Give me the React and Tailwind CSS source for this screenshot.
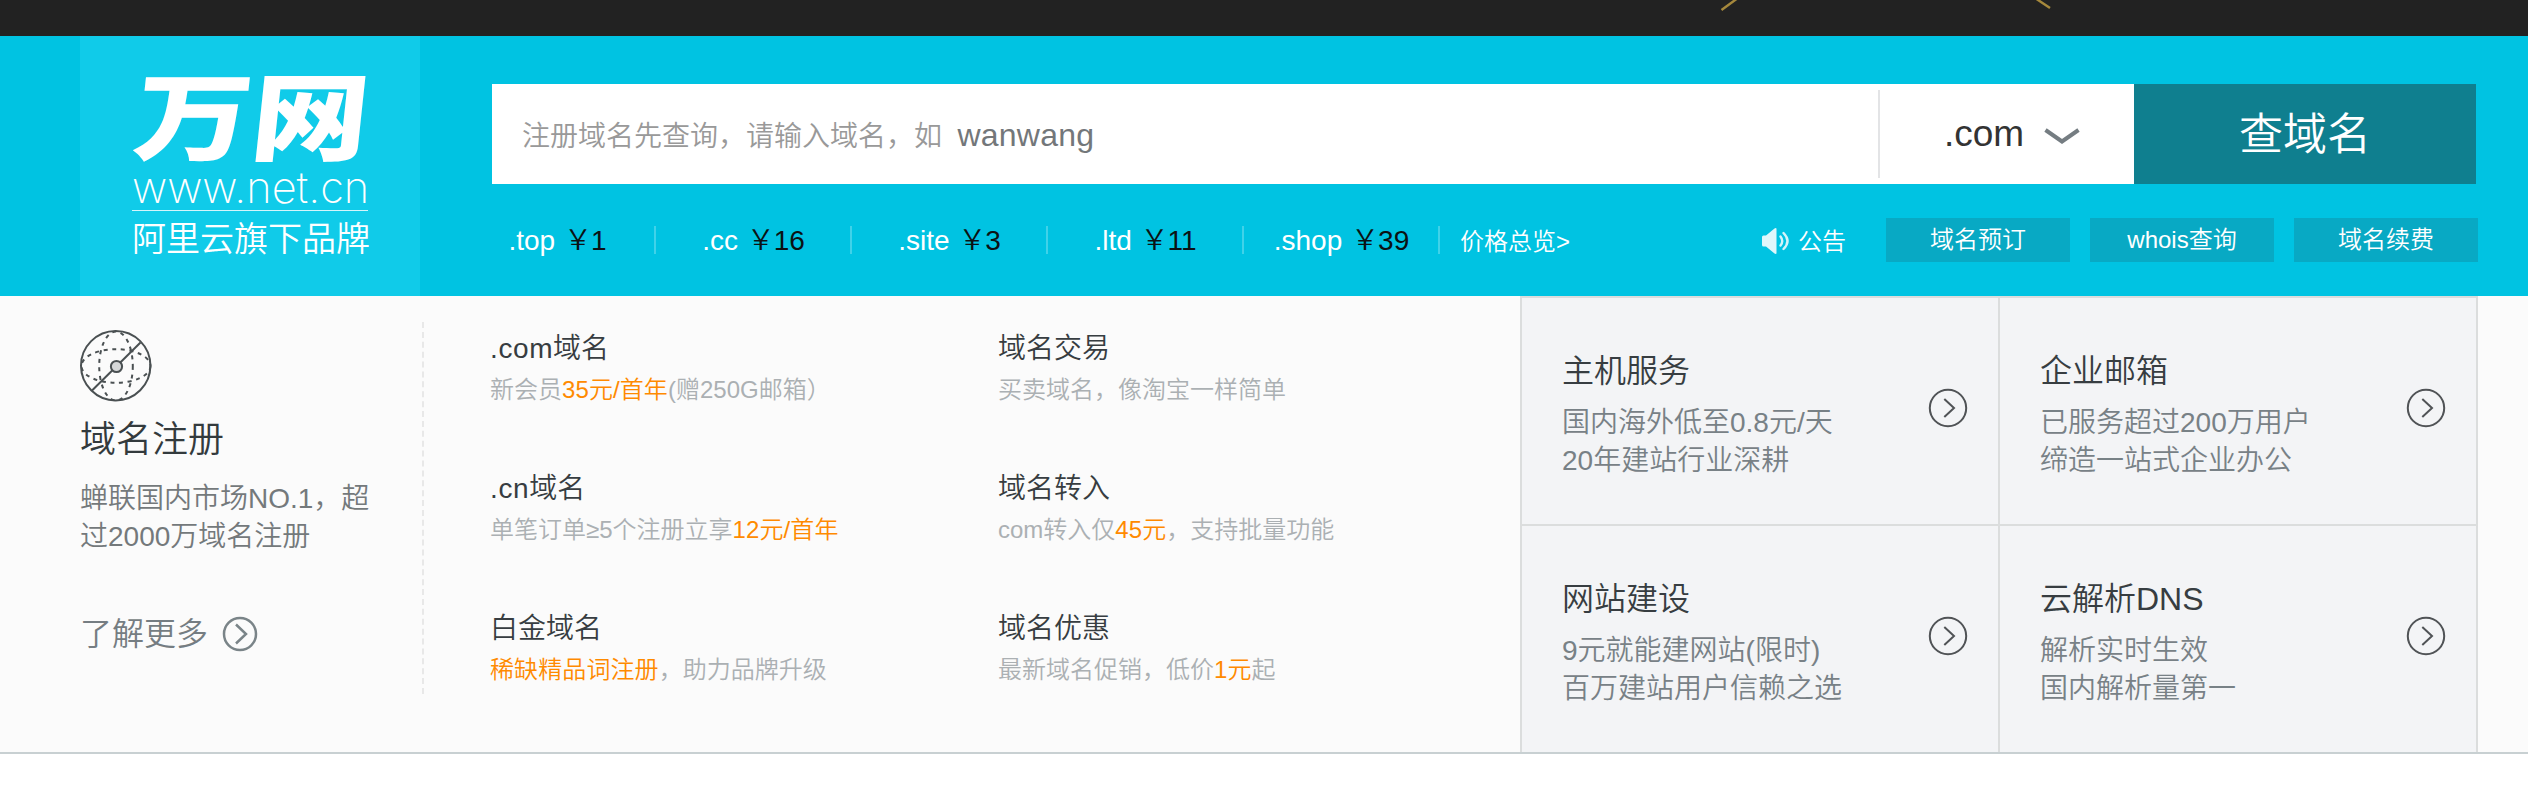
const prices = [
  ['.top', '1'],
  ['.cc', '16'],
  ['.site', '3'],
  ['.ltd', '11'],
  ['.shop', '39'],
];

const shortcuts = ['域名预订', 'whois查询', '域名续费'];

const Hot = ({ children }) => <span className="tracking-[0.1px] text-[#ff8a00]">{children}</span>;

const offers = [
  { latin: '.com', title: '域名', text: <>新会员<Hot>35元/首年</Hot>(赠250G邮箱）</> },
  { title: '域名交易', text: <>买卖域名，像淘宝一样简单</> },
  { latin: '.cn', title: '域名', text: <>单笔订单≥5个注册立享<Hot>12元/首年</Hot></> },
  { title: '域名转入', text: <>com转入仅<Hot>45元</Hot>，支持批量功能</> },
  { title: '白金域名', text: <><Hot>稀缺精品词注册</Hot>，助力品牌升级</> },
  { title: '域名优惠', text: <>最新域名促销，低价<Hot>1元</Hot>起</> },
];

const services = [
  { title: '主机服务', lines: ['国内海外低至0.8元/天', '20年建站行业深耕'] },
  { title: '企业邮箱', lines: ['已服务超过200万用户', '缔造一站式企业办公'] },
  { title: '网站建设', lines: ['9元就能建网站(限时)', '百万建站用户信赖之选'] },
  { title: '云解析DNS', lines: ['解析实时生效', '国内解析量第一'] },
];

function Globe() {
  return (
    <svg className="block size-[72px]" viewBox="0 0 72 72" fill="none" stroke="#4a5052" strokeWidth="2">
      <circle cx="35.7" cy="35.7" r="34.7" />
      <ellipse cx="36" cy="36" rx="16.8" ry="34.5" strokeDasharray="4 4.6" />
      <ellipse cx="36" cy="36" rx="34.5" ry="16.8" strokeDasharray="4 4.6" />
      <path d="M12 60.5 60.5 12.5" />
      <circle cx="36.5" cy="36.5" r="5.6" fill="#d5d7d8" />
    </svg>
  );
}

function Speaker() {
  return (
    <svg className="mt-[10px] block h-[26px] w-[27px]" viewBox="0 0 27 26" fill="none">
      <path d="M0 9Q0 7.500 1.500 7.500H4L12.500 0.500Q14.500-.5 14.500 1V25Q14.500 26.500 12.500 25.500L4 18.500H1.500Q0 18.500 0 17Z" fill="#e0f7fb" />
      <path d="M18.500 8.500Q22 13 18.500 17.500M21.500 5Q29.500 13 21.500 21" stroke="#d3f4fa" strokeWidth="2.400" strokeLinecap="round" />
    </svg>
  );
}

export default function App() {
  return (
    <div className="h-[800px] w-[2528px] overflow-hidden bg-white font-['Liberation_Sans','Noto_Sans_CJK_SC',sans-serif] font-[350]">
      <div className="h-[36px] bg-[#222222]">
        <svg className="ml-[1720px] block h-[12px] w-[340px]" viewBox="0 0 340 12" fill="none" stroke="#a5883c" strokeWidth="2.400">
          <path d="M1.500 10 22-5M306-8 330 8" />
        </svg>
      </div>

      <header className="flex h-[260px] bg-[#00c3e2] pl-[80px]">
        <div className="w-[340px] shrink-0 bg-[#10cbe9] pt-[25px] pl-[52px] text-white">
          <div className="h-[100px] w-[200px] origin-left -skew-x-[5deg] scale-x-[1.22] pl-[3px] font-['Noto_Sans_CJK_SC',sans-serif] text-[96px] leading-[101px] font-black whitespace-nowrap">万网</div>
          <div className="mt-[3px] h-[46px] font-['Inter',sans-serif] text-[43.3px] leading-[47px] font-extralight">www.net.cn</div>
          <div className="h-px w-[236px] bg-[#d5f5fb]" />
          <div className="mt-[8px] text-[34px] leading-[40px] whitespace-nowrap">阿里云旗下品牌</div>
        </div>

        <div className="w-[2058px] pt-[48px] pl-[40px]">
          <div className="ml-[32px] flex h-[100px] w-[1984px] bg-white">
            <div className="h-[100px] w-[1386px] pt-px pl-[30px] text-[28px] leading-[100px] whitespace-pre text-[#999999]">
              {'注册域名先查询，请输入域名，如  '}<span className="text-[32px] tracking-[0.2px] text-[#73777a]">wanwang</span>
            </div>
            <div className="mt-[6px] h-[88px] w-[2px] bg-[#e3e4e6]" />
            <div className="flex w-[254px] items-center pl-[64px] text-[#333333]">
              <span className="text-[37px] leading-[98px]">.com</span>
              <svg className="mt-[4px] ml-[20px] h-[18px] w-[36px]" viewBox="0 0 36 18" fill="none" stroke="#757d82" strokeWidth="4">
                <path d="M1.500 3 18 14.500 34.500 3" />
              </svg>
            </div>
            <button className="flex-1 bg-[#0f7f8f] pt-px text-[44px] leading-[99px] text-white">查域名</button>
          </div>

          <div className="mt-[34px] flex h-[44px] w-[2018px] text-white">
            {prices.map(([name, price]) => (
              <div key={name} className="flex w-[196px] items-center">
                <div className="flex-1 pl-px text-center text-[28px] leading-[45px] whitespace-nowrap">
                  {name} <span className="text-[#0b1214]"><span className="inline-block translate-x-px">￥</span>{price}</span>
                </div>
                <div className="h-[28px] w-[2px] bg-[#40d2e9]" />
              </div>
            ))}
            <div className="pl-[20px] text-[24px] leading-[47px]">价格总览&gt;</div>
            <div className="ml-auto flex">
              <Speaker />
              <div className="mr-[40px] ml-[9px] text-[24px] leading-[47px]">公告</div>
              <div className="flex gap-[20px]">
                {shortcuts.map((s) => (
                  <button key={s} className="h-[44px] w-[184px] bg-[#08a9c4] text-[24px] leading-[44px]">{s}</button>
                ))}
              </div>
            </div>
          </div>
        </div>
      </header>

      <main className="flex h-[458px] border-b-2 border-[#c8d0d2] bg-[#fbfbfb] pl-[80px]">
        <section className="w-[342px] pt-[34px]">
          <Globe />
          <h2 className="mt-[14px] text-[36px] leading-[48px] text-[#333a3d]">域名注册</h2>
          <p className="mt-[16px] text-[28px] leading-[38px] text-[#74797b]">
            蝉联国内市场NO.1，超
            <br />
            过2000万域名注册
          </p>
          <div className="mt-[59px] flex items-center gap-[14px] text-[#757d82]">
            <span className="text-[32px] leading-[34px]">了解更多</span>
            <svg className="mt-px size-[36px]" viewBox="0 0 36 36" fill="none" stroke="#7a8488" strokeWidth="2.500">
              <circle cx="18" cy="18" r="16" />
              <path d="M14 8.500 24 18 14 27.500" />
            </svg>
          </div>
        </section>

        <div className="mt-[26px] h-[372px] border-l-2 border-dashed border-[#e8e8e8]" />

        <section className="grid w-[1096px] auto-rows-[78px] grid-cols-[508px_508px] gap-y-[62px] pt-[33px] pl-[66px] whitespace-nowrap">
          {offers.map((o) => (
            <div key={(o.latin || '') + o.title}>
              <h3 className="text-[28px] leading-[40px] text-[#373d41]">
                {o.latin && <span className="tracking-[0.6px]">{o.latin}</span>}
                {o.title}
              </h3>
              <p className="mt-[5px] text-[24px] leading-[32px] text-[#abb0b3]">{o.text}</p>
            </div>
          ))}
        </section>

        <section className="grid h-[456px] w-[958px] grid-cols-[476px_476px] grid-rows-[226px_226px] gap-[2px] bg-[#dbdddd] pt-[2px] pl-[2px]">
          {services.map((s) => (
            <div key={s.title} className="flex justify-between bg-[#f3f4f6] pt-[53px] pr-[30px] pl-[40px] whitespace-nowrap">
              <div>
                <h3 className="text-[32px] leading-[40px] text-[#373d41]">{s.title}</h3>
                {s.lines.map((l, i) => (
                  <p key={l} className={i === 0 ? 'mt-[13px] text-[28px] leading-[38px] text-[#788186]' : 'text-[28px] leading-[38px] text-[#788186]'}>{l}</p>
                ))}
              </div>
              <svg className="mt-[37px] size-[40px]" viewBox="0 0 40 40" fill="none" stroke="#505356" strokeWidth="2">
                <circle cx="20" cy="20" r="18.200" />
                <path d="M16.300 11 26 20 16.300 29" />
              </svg>
            </div>
          ))}
        </section>
      </main>
    </div>
  );
}
